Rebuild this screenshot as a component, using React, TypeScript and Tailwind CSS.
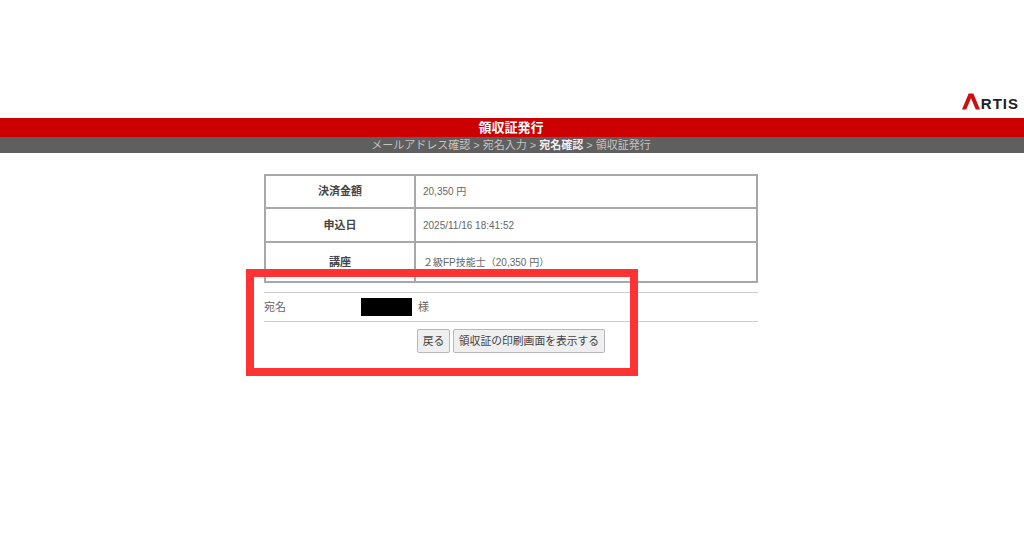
export default function App() {
  const font = "font-['Liberation_Sans','Noto_Sans_CJK_JP',sans-serif]";
  return (
    <div className={`relative h-[538px] w-[1024px] overflow-hidden bg-white ${font}`}>
      <header className="flex h-[118px] items-end justify-end pb-[8px] pr-[5px]">
        <div className="flex items-end">
          <svg width="18" height="17" viewBox="0 0 19 17">
            <path d="M0 17 L7 0 H12 L19 17 H14.5 L9.5 5 L4.5 17 Z" fill="#cc1010" />
          </svg>
          <span className="ml-[1px] text-[15px] font-bold leading-[12px] tracking-[1px] text-[#222]">RTIS</span>
        </div>
      </header>
      <div className="flex h-[19px] items-center justify-center bg-[#cc0000] pr-[2px] pt-[1px] text-[13px] font-bold text-white">
        領収証発行
      </div>
      <div className="flex h-[16px] items-center justify-center bg-[#5f5f5f] pr-[2px] pt-[1px] text-[11px] leading-none text-[#c4c4c4]">
        <span>メールアドレス確認 &gt; 宛名入力 &gt;&nbsp;</span>
        <span className="font-bold text-[#f4eef4]">宛名確認</span>
        <span>&nbsp;&gt; 領収証発行</span>
      </div>
      <main className="ml-[264px] mt-[21px] w-[494px]">
        <div className="border-2 border-[#a8a8a8] text-[10px] text-[#666]">
          <div className="flex h-[33px] border-b-2 border-[#a8a8a8]">
            <div className="flex w-[150px] items-center justify-center border-r-2 border-[#a8a8a8] text-[11px] font-bold text-[#444]">決済金額</div>
            <div className="flex items-center pl-[7px]">20,350 円</div>
          </div>
          <div className="flex h-[34px] border-b-2 border-[#a8a8a8]">
            <div className="flex w-[150px] items-center justify-center border-r-2 border-[#a8a8a8] text-[11px] font-bold text-[#444]">申込日</div>
            <div className="flex items-center pl-[7px]">2025/11/16 18:41:52</div>
          </div>
          <div className="flex h-[38px]">
            <div className="flex w-[150px] items-center justify-center border-r-2 border-[#a8a8a8] text-[11px] font-bold text-[#444]">講座</div>
            <div className="flex items-center pl-[7px]">２級FP技能士（20,350 円）</div>
          </div>
        </div>
        <div className="mt-[9px] flex h-[30px] items-center border-y border-[#cccccc] text-[11px] text-[#666]">
          <span className="w-[97px]">宛名</span>
          <span className="h-[18px] w-[51px] bg-black"></span>
          <span className="ml-[6px]">様</span>
        </div>
        <div className="mt-[7px] flex justify-center gap-[3px] text-[10.8px] text-[#444]">
          <button className="h-[24px] w-[33px] rounded-[2px] border border-[#b8b8b8] bg-[#efefef] pt-[1px]">戻る</button>
          <button className="h-[24px] w-[152px] rounded-[2px] border border-[#b8b8b8] bg-[#efefef] pt-[1px]">領収証の印刷画面を表示する</button>
        </div>
      </main>
      <div className="absolute left-[246px] top-[269px] h-[107px] w-[392px] border-[8px] border-[#ff3333]"></div>
    </div>
  );
}
